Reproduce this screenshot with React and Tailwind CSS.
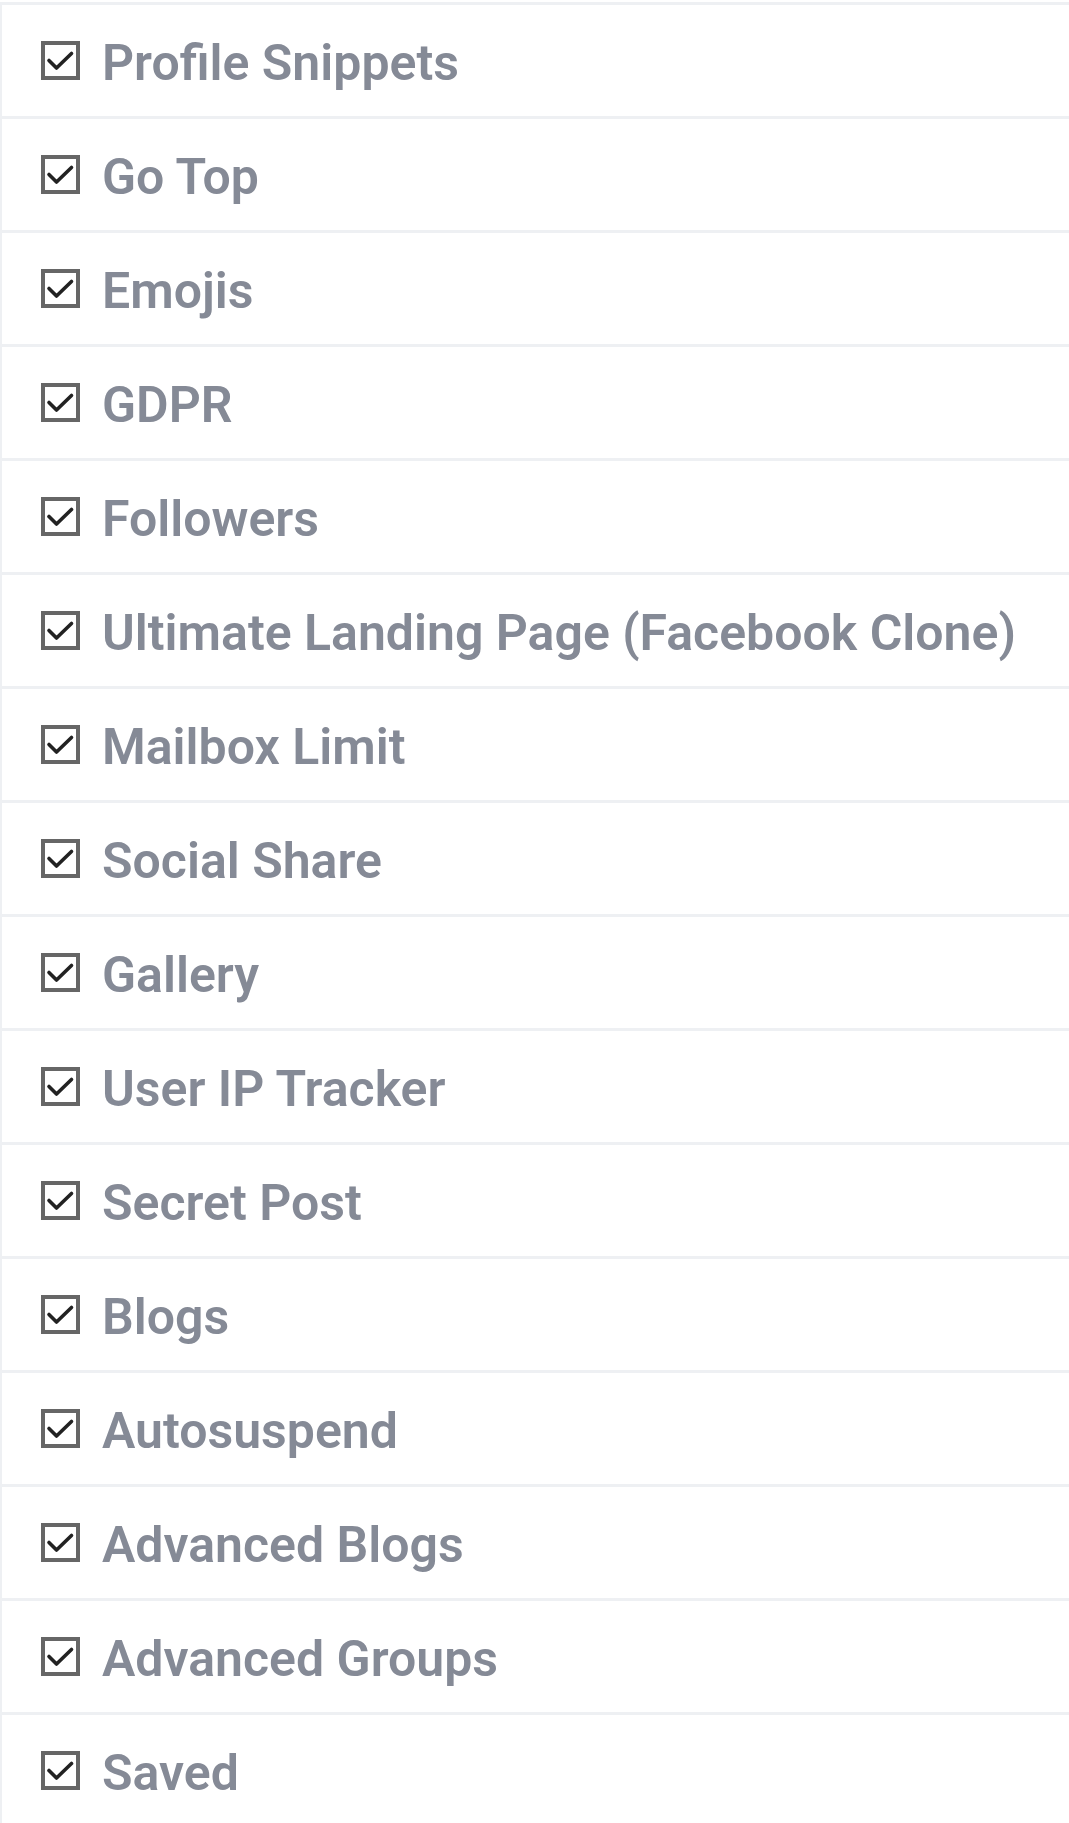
import React from 'react';

const plugins = [
  'Profile Snippets',
  'Go Top',
  'Emojis',
  'GDPR',
  'Followers',
  'Ultimate Landing Page (Facebook Clone)',
  'Mailbox Limit',
  'Social Share',
  'Gallery',
  'User IP Tracker',
  'Secret Post',
  'Blogs',
  'Autosuspend',
  'Advanced Blogs',
  'Advanced Groups',
  'Saved',
];

const CheckBox = () => (
  <span className="flex h-[39px] w-[39px] shrink-0 border-[4px] border-[#666666] bg-white">
    <svg width="31" height="31" viewBox="0 0 31 31" fill="none">
      <path d="M4 15.5l7.5 7.5L26.5 8.5" stroke="#222222" strokeWidth="3.6" strokeLinecap="round" strokeLinejoin="round" />
    </svg>
  </span>
);

export default function App() {
  return (
    <div className="w-full overflow-hidden bg-white pt-[2px]" style={{ fontFamily: 'Roboto, "Noto Sans", sans-serif' }}>
      <ul className="w-[1200px] border-l-2 border-t-[3px] border-[#eef0f3]">
        {plugins.map((name) => (
          <li key={name} className="flex h-[114px] items-center gap-[22px] border-b-[3px] border-[#eef0f3] pl-[39px]">
            <CheckBox />
            <span className="pt-[5px] text-[50px] font-semibold leading-none text-[#858a96]">{name}</span>
          </li>
        ))}
      </ul>
    </div>
  );
}
